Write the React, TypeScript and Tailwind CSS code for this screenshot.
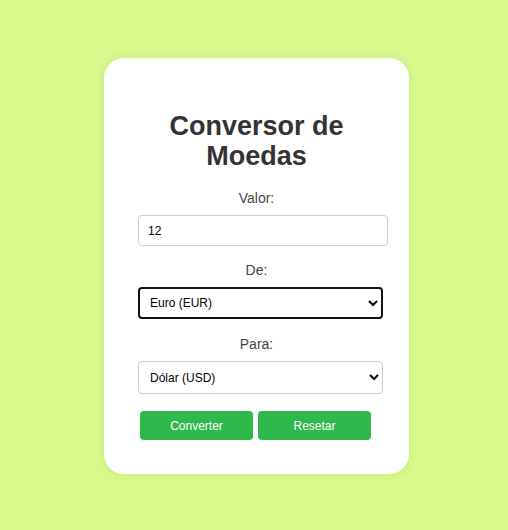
import React, { useState } from 'react';

const moedas = [
  { code: 'EUR', label: 'Euro (EUR)' },
  { code: 'USD', label: 'Dólar (USD)' },
  { code: 'BRL', label: 'Real (BRL)' },
];

export default function App() {
  const [valor, setValor] = useState('12');
  const [de, setDe] = useState('EUR');
  const [para, setPara] = useState('USD');

  return (
    <div className="min-h-[530px] w-full bg-[#d6fa8c] pt-[58px] pl-[104px] font-['Liberation_Sans',Arial,sans-serif]">
      <div className="w-[305px] h-[416px] rounded-[20px] bg-white shadow-[0_0_10px_rgba(0,0,0,0.08)] flex flex-col pt-[53px]">
        {/* Title */}
        <h1 className="text-center text-[27px] leading-[30px] font-bold text-[#333] px-[40px]">
          Conversor de Moedas
        </h1>

        <label className="mt-[17px] text-center text-[14px] leading-[20px] text-[#444]">Valor:</label>
        <input
          value={valor}
          onChange={(e) => setValor(e.target.value)}
          className="mt-[7px] ml-[34px] w-[250px] h-[31px] rounded-[4px] border border-[#ccc] pl-[9px] text-[12px] text-black outline-none"
        />

        <label className="mt-[14px] text-center text-[14px] leading-[20px] text-[#444]">De:</label>
        <select
          value={de}
          onChange={(e) => setDe(e.target.value)}
          className="mt-[7px] ml-[34px] w-[245px] h-[32px] rounded-[4px] border-2 border-[#111] pl-[6px] text-[12px] text-black bg-white outline-none"
        >
          {moedas.map((m) => (
            <option key={m.code} value={m.code}>{m.label}</option>
          ))}
        </select>

        <label className="mt-[15px] text-center text-[14px] leading-[20px] text-[#444]">Para:</label>
        <select
          value={para}
          onChange={(e) => setPara(e.target.value)}
          className="mt-[7px] ml-[34px] w-[245px] h-[33px] rounded-[4px] border border-[#ccc] pl-[7px] text-[12px] text-black bg-white outline-none"
        >
          {moedas.map((m) => (
            <option key={m.code} value={m.code}>{m.label}</option>
          ))}
        </select>

        {/* Buttons */}
        <div className="mt-[17px] ml-[36px] flex gap-[5px]">
          <button className="w-[113px] h-[29px] rounded-[4px] bg-[#2fb84b] text-white text-[12px]">
            Converter
          </button>
          <button
            onClick={() => { setValor(''); setDe('EUR'); setPara('USD'); }}
            className="w-[113px] h-[29px] rounded-[4px] bg-[#2fb84b] text-white text-[12px]"
          >
            Resetar
          </button>
        </div>
      </div>
    </div>
  );
}
